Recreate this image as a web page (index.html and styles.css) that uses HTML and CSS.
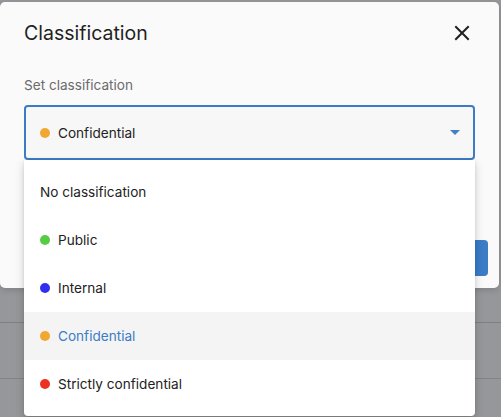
FILE: index.html
```html
<!DOCTYPE html>
<html>
<head>
<meta charset="utf-8">
<link rel="stylesheet" href="styles.css">
</head>
<body>
<div class="dialog">
  <div class="header">
    <h1 class="title">Classification</h1>
    <button class="close" aria-label="Close">
      <svg width="16" height="16" viewBox="0 0 16 16"><path d="M2 2 L14 14 M14 2 L2 14" stroke="#1f1f1f" stroke-width="2" stroke-linecap="square"/></svg>
    </button>
  </div>
  <div class="label">Set classification</div>
  <div class="select-wrap">
    <div class="select">
      <span class="dot orange"></span>
      <span class="value">Confidential</span>
      <svg class="caret" width="10" height="6" viewBox="0 0 10 6"><path d="M0 0 H10 L5 5 Z" fill="#3f80c6"/></svg>
    </div>
    <ul class="menu">
      <li class="item">No classification</li>
      <li class="item"><span class="dot green"></span>Public</li>
      <li class="item"><span class="dot blue"></span>Internal</li>
      <li class="item active"><span class="dot orange"></span>Confidential</li>
      <li class="item"><span class="dot red"></span>Strictly confidential</li>
    </ul>
  </div>
  <div class="footer">
    <button class="primary"></button>
  </div>
</div>
</body>
</html>
```
FILE: styles.css
```css
html, body {
  margin: 0;
  padding: 0;
}
body {
  width: 501px;
  height: 417px;
  overflow: hidden;
  font-family: Inter, "Noto Sans", sans-serif;
  background:
    linear-gradient(#7f8082, #7f8082) 0 322px / 100% 1px no-repeat,
    linear-gradient(#838486, #838486) 0 378px / 100% 1px no-repeat,
    #96979a;
  padding-top: 2px;
  box-sizing: border-box;
}
.dialog {
  width: 499px;
  height: 286px;
  background: #fafafa;
  border-radius: 5px;
  box-sizing: border-box;
  padding: 0 24px 12px;
  display: flex;
  flex-direction: column;
  box-shadow: 0 2px 6px rgba(0,0,0,0.15);
}
.header {
  display: flex;
  align-items: center;
  justify-content: space-between;
  height: 62px;
}
.title {
  margin: 0;
  font-size: 19.5px;
  font-weight: 400;
  color: #1f1f1f;
}
.close {
  border: 0;
  background: none;
  padding: 0;
  width: 16px;
  height: 16px;
  margin-right: 5px;
  display: flex;
}
.label {
  margin-top: 11px;
  font-size: 13.6px;
  color: #6b6b6b;
  line-height: 20px;
}
.select-wrap {
  position: relative;
  margin-top: 10px;
}
.select {
  height: 55px;
  border: 2px solid #3b7cc4;
  border-radius: 4px;
  background: #f7f7f7;
  box-sizing: border-box;
  display: flex;
  align-items: center;
  padding-left: 14px;
  padding-right: 13px;
  font-size: 13.6px;
  color: #222;
}
.value {
  flex: 1;
}
.caret {
  display: block;
}
.dot {
  display: inline-block;
  width: 10px;
  height: 10px;
  border-radius: 50%;
  margin-right: 8px;
  flex: none;
}
.orange { background: #f1a832; }
.green { background: #55cc44; }
.blue { background: #2f2ff0; }
.red { background: #ec3322; }
.menu {
  position: absolute;
  top: 55px;
  left: 0;
  right: 0;
  margin: 0;
  padding: 8px 0;
  list-style: none;
  background: #fff;
  border-radius: 0 0 4px 4px;
  box-shadow: 0 4px 10px rgba(0,0,0,0.18), 0 1px 3px rgba(0,0,0,0.1);
  z-index: 2;
}
.item {
  height: 48px;
  display: flex;
  align-items: center;
  padding-left: 16px;
  font-size: 13.6px;
  color: #222;
}
.item.active {
  background: #f4f4f4;
  color: #3b7cc4;
}
.footer {
  display: flex;
  justify-content: flex-end;
  margin-top: auto;
  margin-right: -13px;
}
.primary {
  width: 80px;
  height: 36px;
  border: 0;
  border-radius: 4px;
  background: #3a7cc6;
}
```
